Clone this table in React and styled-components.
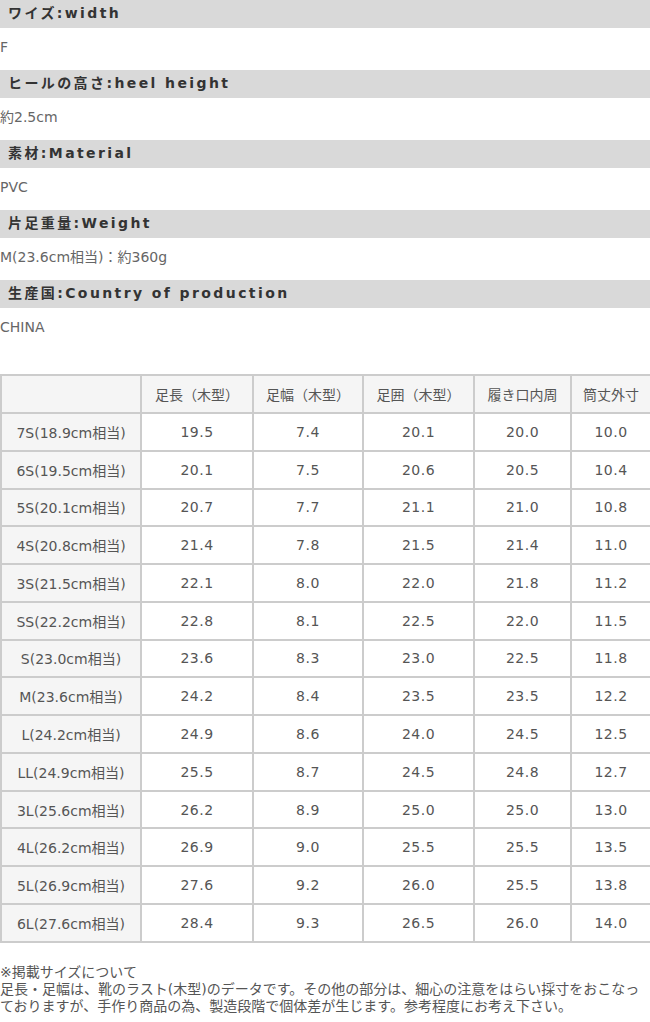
import React from 'react';
import styled, { createGlobalStyle } from 'styled-components';

const GlobalStyle = createGlobalStyle`
  body {
    margin: 0;
    background: #fff;
    font-family: "DejaVu Sans", "Noto Sans CJK JP", sans-serif;
    font-size: 14px;
    color: #666;
  }
`;

const Page = styled.div`
  width: 650px;
`;

const SpecTitle = styled.h3`
  margin: 0;
  height: 28px;
  line-height: 27px;
  padding-left: 8px;
  background: #d9d9d9;
  color: #333;
  font-size: 14px;
  font-weight: bold;
  letter-spacing: 2.4px;
`;

const SpecValue = styled.p`
  margin: 0;
  padding: 9px 0 13px;
  line-height: 20px;
  color: #666;
`;

const SizeTable = styled.table`
  width: 650px;
  margin-top: 24px;
  border-collapse: collapse;
  table-layout: fixed;
  color: #555;
`;

const Cell = styled.td`
  border: 2px solid #ccc;
  height: ${(p) => (p.$head ? '36px' : '35.77px')};
  padding: 0;
  text-align: center;
  font-size: 14px;
  font-weight: normal;
  background: ${(p) => (p.$shade ? '#f5f5f5' : '#fff')};
  letter-spacing: ${(p) => (p.$num ? '0.5px' : '0')};
`;

const Note = styled.div`
  margin-top: 21px;
  line-height: 17px;
  color: #555;
`;

const specs = [
  { title: 'ワイズ:width', value: 'F' },
  { title: 'ヒールの高さ:heel height', value: '約2.5cm' },
  { title: '素材:Material', value: 'PVC' },
  { title: '片足重量:Weight', value: 'M(23.6cm相当)：約360g' },
  { title: '生産国:Country of production', value: 'CHINA' },
];

const columns = ['', '足長（木型）', '足幅（木型）', '足囲（木型）', '履き口内周', '筒丈外寸'];
const widths = [140, 112, 110, 111, 97, 80];

const rows = [
  ['7S(18.9cm相当)', '19.5', '7.4', '20.1', '20.0', '10.0'],
  ['6S(19.5cm相当)', '20.1', '7.5', '20.6', '20.5', '10.4'],
  ['5S(20.1cm相当)', '20.7', '7.7', '21.1', '21.0', '10.8'],
  ['4S(20.8cm相当)', '21.4', '7.8', '21.5', '21.4', '11.0'],
  ['3S(21.5cm相当)', '22.1', '8.0', '22.0', '21.8', '11.2'],
  ['SS(22.2cm相当)', '22.8', '8.1', '22.5', '22.0', '11.5'],
  ['S(23.0cm相当)', '23.6', '8.3', '23.0', '22.5', '11.8'],
  ['M(23.6cm相当)', '24.2', '8.4', '23.5', '23.5', '12.2'],
  ['L(24.2cm相当)', '24.9', '8.6', '24.0', '24.5', '12.5'],
  ['LL(24.9cm相当)', '25.5', '8.7', '24.5', '24.8', '12.7'],
  ['3L(25.6cm相当)', '26.2', '8.9', '25.0', '25.0', '13.0'],
  ['4L(26.2cm相当)', '26.9', '9.0', '25.5', '25.5', '13.5'],
  ['5L(26.9cm相当)', '27.6', '9.2', '26.0', '25.5', '13.8'],
  ['6L(27.6cm相当)', '28.4', '9.3', '26.5', '26.0', '14.0'],
];

export default function App() {
  return (
    <Page>
      <GlobalStyle />
      {specs.map((s) => (
        <div key={s.title}>
          <SpecTitle>{s.title}</SpecTitle>
          <SpecValue>{s.value}</SpecValue>
        </div>
      ))}

      <SizeTable>
        <colgroup>
          {widths.map((w, i) => (
            <col key={i} style={{ width: w }} />
          ))}
        </colgroup>
        <thead>
          <tr>
            {columns.map((c, i) => (
              <Cell as="th" key={i} $shade $head>
                {c}
              </Cell>
            ))}
          </tr>
        </thead>
        <tbody>
          {rows.map((r) => (
            <tr key={r[0]}>
              {r.map((v, i) => (
                <Cell key={i} $shade={i === 0} $num={i > 0}>
                  {v}
                </Cell>
              ))}
            </tr>
          ))}
        </tbody>
      </SizeTable>

      <Note>
        ※掲載サイズについて
        <br />
        足長・足幅は、靴のラスト(木型)のデータです。その他の部分は、細心の注意をはらい採寸をおこなっておりますが、手作り商品の為、製造段階で個体差が生じます。参考程度にお考え下さい。
      </Note>
    </Page>
  );
}
